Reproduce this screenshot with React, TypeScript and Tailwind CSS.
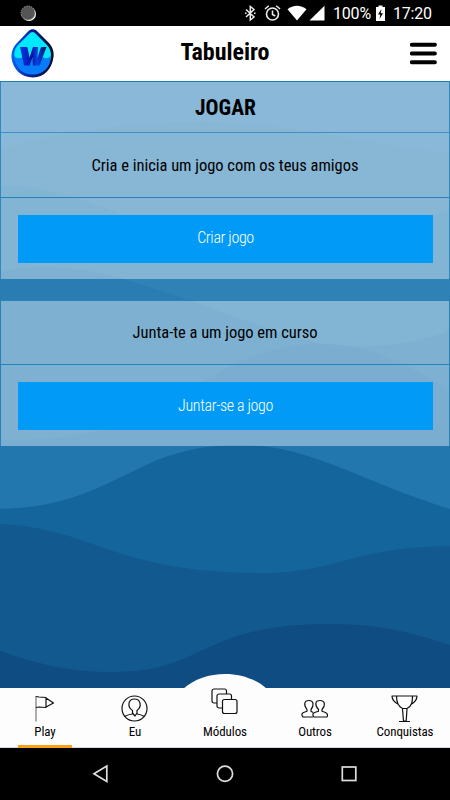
import React from "react";

function Waves() {
  return (
    <svg className="absolute inset-0 h-full w-full" viewBox="0 82 450 606" preserveAspectRatio="none" aria-hidden="true">
      <rect y="82" width="450" height="606" fill="#3b89be" />
      <path d="M0 149C50 134 120 122 200 122C290 122 360 143 450 154V688H0Z" fill="#3787ba" />
      <path d="M0 185C40 186 80 198 120 214C190 241 250 253 310 251C370 248 410 222 450 210V688H0Z" fill="#2f82b6" />
      <path d="M0 271C35 265 75 265 120 278C185 297 240 320 290 336C345 353 400 348 450 331V688H0Z" fill="#297db3" />
      <path d="M0 440C50 440 90 437 140 418C200 390 240 344 320 344C375 344 410 367 450 390V688H0Z" fill="#2277af" />
      <path d="M0 509C60 508 95 490 140 468C170 453 200 445 240 445C310 445 355 479 450 509V688H0Z" fill="#14659c" />
      <path d="M0 524C45 526 75 538 110 550C160 567 205 573 260 573C340 573 350 547 450 546V688H0Z" fill="#12598f" />
      <path d="M0 651C40 664 65 672 115 672C205 672 200 624 330 624C385 624 415 634 450 645V688H0Z" fill="#0e4c82" />
    </svg>
  );
}

function StatusBar() {
  return (
    <div className="flex h-[26px] shrink-0 items-center bg-black pt-px pl-[20px] pr-[17px] text-white">
      <svg width="17" height="17" viewBox="0 0 17 17">
        <circle cx="9" cy="9" r="7" fill="#fff" />
        <circle cx="8" cy="8" r="7" fill="#555" stroke="#aaa" strokeWidth="1" strokeDasharray="1.2 1.2" />
      </svg>
      <svg className="ml-auto" width="88" height="18" viewBox="244 5 88 18" fill="none" stroke="#eee">
        <path d="M246 9.5L254 17L250.3 20V6.5L254 9.5L246 17M245 13.2h1.5M254 13.2h1.5" strokeWidth="1.5" />
        <circle cx="272.5" cy="14" r="6" strokeWidth="1.6" />
        <path d="M272.5 10.5V14.5L275.3 16M265 9L268.8 5.8M276.2 5.8L280 9" strokeWidth="1.5" />
        <path d="M287.5 9.3C293 4.5 301 4.5 306.500 9.300L297 20.500Z" fill="#fff" stroke="none" />
        <path d="M324.500 5.800V20.500H309.500Z" fill="#fff" stroke="none" />
      </svg>
      <span className="ml-[1px] w-[38px] whitespace-nowrap text-[16px] leading-none tracking-[-0.2px]">100%</span>
      <svg className="ml-[4px]" width="11" height="17" viewBox="0 0 11 17">
        <path d="M3.500 0.500H7.500V2H10V16H1V2H3.500Z" fill="#fff" />
        <path d="M6.500 4L3 9.500H5.300L4.500 14L8 8.300H5.700Z" fill="#000" />
      </svg>
      <span className="ml-[7px] w-[40px] whitespace-nowrap text-[16px] leading-none tracking-[-0.2px]">17:20</span>
    </div>
  );
}

function Logo() {
  return (
    <svg width="44" height="50" viewBox="11 29 44 50">
      <defs>
        <linearGradient id="rim" x1="0" x2="1">
          <stop offset="0" stopColor="#0068f5" />
          <stop offset=".35" stopColor="#0828b0" />
          <stop offset=".8" stopColor="#02104c" />
          <stop offset="1" stopColor="#000b24" />
        </linearGradient>
        <linearGradient id="letter" x1="0" x2="1">
          <stop offset="0" stopColor="#0638ee" />
          <stop offset=".45" stopColor="#0414a0" />
          <stop offset=".65" stopColor="#0545e8" />
          <stop offset="1" stopColor="#020c55" />
        </linearGradient>
      </defs>
      <path d="M28.500 31C31 28.500 34.500 28.500 37 31L49 43C53.500 48 54 53 53.500 57C52 69 44 77.500 33 77.500C21 77.500 13 69 11.500 58C11 52 13 47 17 43Z" fill="url(#rim)" />
      <path d="M30 33Q32.500 31 35 33L46.500 44.500C51 49 51.500 54 50.500 59C40 60 26 61 15 58C13 53 15 48 19 44Z" fill="#00e8fb" />
      <path d="M14 56Q18 60 23 57Q28 60 33 59Q39 60 43 57Q47 60 51 56C51 67 43 74.500 33 74.500C22 74.500 15 67 14 56Z" fill="#087cf8" />
      <path d="M20 47H27.300L29.500 57.500L33 47H38L37.500 57.500L41 47H46.500L39.500 65.500H33L32.500 57.500L29.500 65.500H24Z" fill="url(#letter)" />
    </svg>
  );
}

function Header() {
  return (
    <header className="relative flex h-[55px] shrink-0 items-center justify-between bg-white pl-[11px] pr-[13px]">
      <Logo />
      <h1 className="absolute inset-x-0 top-[9px] text-center text-[24px] leading-[34px] font-bold">Tabuleiro</h1>
      <svg width="27" height="23" viewBox="0 0 27 23"><path d="M1.800 2.800H24.900M1.800 11.500H24.900M1.800 20.300H24.900" stroke="#000" strokeWidth="4" strokeLinecap="round" /></svg>
    </header>
  );
}

function ActionButton({ children }: { children: React.ReactNode }) {
  return <button className="block h-[48px] w-full bg-[#019bf7] pb-px text-[16px] font-[340] tracking-[-0.35px] text-white">{children}</button>;
}

function NavItem({ label, active, children }: { label: string; active?: boolean; children: React.ReactNode }) {
  return (
    <div className="relative flex w-[90px] flex-col items-center">
      <svg width="30" height="38" viewBox="0 0 30 38" fill="none" stroke="#111" strokeWidth="1.200" strokeLinejoin="round">{children}</svg>
      <span className="-mt-[3px] whitespace-nowrap text-[13px] leading-[18px] tracking-[-0.1px]">{label}</span>
      {active && <span className="absolute -bottom-px left-[18px] h-[3px] w-[54px] bg-[#f9a01b]" />}
    </div>
  );
}

function BottomNav() {
  return (
    <nav className="relative flex h-[60px] shrink-0 border-b border-gray-300 bg-[#fdfdfd]">
      <svg className="absolute -top-[14px] left-[183px]" width="84" height="15" viewBox="0 0 84 15"><path d="M0 15C22 -5 62 -5 84 15Z" fill="#fdfdfd" /></svg>
      <NavItem label="Play" active>
        <path d="M6 8V33.500" stroke="#777" />
        <path d="M6 8.500L9 9L16 9.500V19.500L9 19L6 19.500M16 10L23.500 15L16 19" />
      </NavItem>
      <NavItem label="Eu">
        <circle cx="14.500" cy="20.500" r="12.500" />
        <path d="M4.500 28.500Q8 26.500 12.500 26V22.500C7 19 8 11 14.500 11C21 11 22 19 17 22.500V26Q21 26.500 24.500 28.500M12.500 25L15 28L17 25" />
      </NavItem>
      <NavItem label="Módulos">
        <g fill="#fdfdfd"><rect x="2" y="1" width="14.500" height="14" rx="2" /><rect x="7" y="6" width="14.500" height="14" rx="2" /><rect x="12.500" y="11.500" width="14.500" height="14" rx="2" /></g>
      </NavItem>
      <NavItem label="Outros">
        <path d="M13 29H3Q0.500 26 3.500 24.500L7 23.300V21.500C3.500 17 4 12.500 9 12.500C14 12.500 14 18 11 21.500V23.300L13 24.500" />
        <path d="M14 29Q11.500 26 14.500 24.500L18.500 23.300V21.500C14.500 17 15 12.500 20 12.500C25.500 12.500 25.500 18 22 21.500V23.300L25.500 24.500Q28.500 26 27 29Z" />
      </NavItem>
      <NavItem label="Conquistas">
        <path d="M6.500 8H22.500C22.500 14 22 18 17 20.500H12.500C7.500 18 6.500 14 6.500 8ZM6.500 8H2Q2 13 8.500 16.500M22.500 8H27Q27 13 21 16.500M12.500 21L13.500 33H16.200L17 21M9 33.500H20" />
      </NavItem>
    </nav>
  );
}

export default function App() {
  return (
    <div className="flex h-[800px] w-[450px] flex-col overflow-hidden bg-black font-['Roboto_Condensed',Roboto,sans-serif] text-black">
      <div className="font-[Roboto,sans-serif]"><StatusBar /></div>
      <div className="flex flex-1 flex-col font-stretch-condensed">
        <Header />
        <main className="relative flex-1 border-t border-[#1c7fb2]">
          <Waves />
          <div className="relative">
            <section className="border-x border-[#3088bf] bg-white/40 bg-clip-padding">
              <h2 className="h-[51px] border-b border-[#3f90c6] pl-px text-center text-[21.500px] leading-[51px] font-bold">JOGAR</h2>
              <p className="h-[65px] border-b border-[#2781b8] text-center text-[16.500px] font-[370] leading-[66px] tracking-[-0.03px]">Cria e inicia um jogo com os teus amigos</p>
              <div className="h-[81px] pt-[16.500px] pr-[16px] pl-[17px]"><ActionButton>Criar jogo</ActionButton></div>
            </section>
            <section className="mt-[21px] border border-b-0 border-[#2b80b6] bg-white/40 bg-clip-padding">
              <p className="h-[64px] border-b border-[#2781b8] text-center text-[16.500px] font-[370] leading-[64px] tracking-[-0.03px]">Junta-te a um jogo em curso</p>
              <div className="h-[81px] pt-[17px] pr-[16px] pl-[17px]"><ActionButton>Juntar-se a jogo</ActionButton></div>
            </section>
          </div>
        </main>
        <BottomNav />
      </div>
      <div className="flex h-[52px] shrink-0 items-center bg-black pl-[92px]">
        <svg width="266" height="20" viewBox="92 764 266 20" fill="none" stroke="#ddd" strokeWidth="1.700">
          <path d="M106.800 766V781.500L94 773.700Z" /><circle cx="225" cy="773.700" r="7.600" /><rect x="342.300" y="767" width="13.500" height="13.500" />
        </svg>
      </div>
    </div>
  );
}
